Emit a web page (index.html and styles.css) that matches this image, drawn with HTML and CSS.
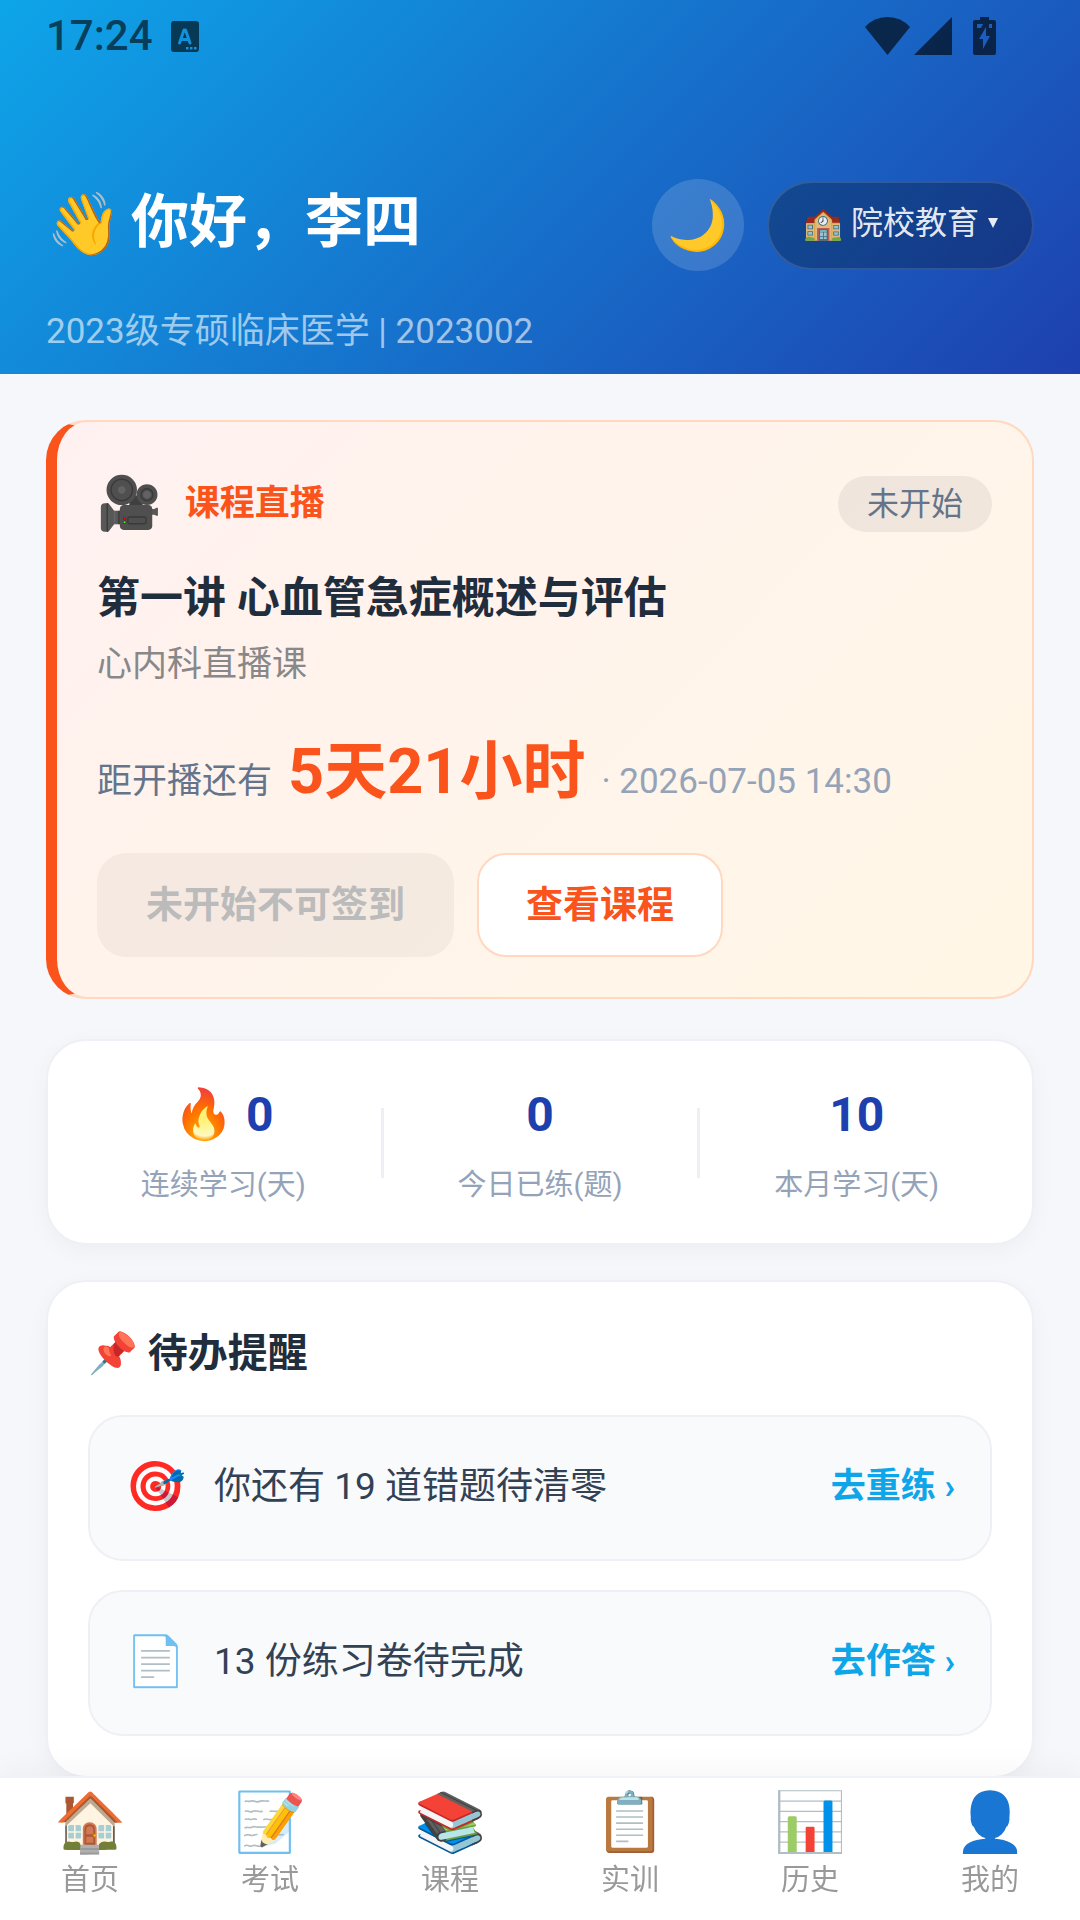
FILE: index.html
```html
<!DOCTYPE html>
<html lang="zh-CN">
<head>
  <meta charset="UTF-8">
  <meta name="viewport" content="width=device-width, initial-scale=1">
  <title>首页</title>
  <link rel="stylesheet" href="styles.css">
</head>
<body>

<header class="header">
  <div class="statusbar">
    <span class="time">17:24</span>
    <svg class="ime" width="28" height="31" viewBox="0 0 28 31">
      <path fill="currentColor" fill-rule="evenodd" d="M3 0h22a3 3 0 0 1 3 3v25a3 3 0 0 1-3 3H3a3 3 0 0 1-3-3V3a3 3 0 0 1 3-3zM15 26v2.500h2.500V26zM19 26v2.500h2.500V26zM23 26v2.500h2.500V26z"/>
      <path fill="none" stroke="#1190dc" stroke-width="3" stroke-linecap="round" stroke-linejoin="round" d="M8.500 22L13 9h1.500L19 22M10.500 18.500h7"/>
    </svg>
    <span class="status-right">
      <svg width="45" height="38" viewBox="0 0 45 38"><path fill="currentColor" d="M0 10Q9 0 22.500 0T45 10L22.500 38z"/></svg>
      <svg width="38" height="38" viewBox="0 0 38 38"><path fill="currentColor" d="M38 0v38H0z"/></svg>
      <svg class="battery" width="23" height="38" viewBox="0 0 23 38">
        <path fill="currentColor" fill-rule="evenodd" d="M7 0h9v3h5a2 2 0 0 1 2 2v31a2 2 0 0 1-2 2H2a2 2 0 0 1-2-2V5a2 2 0 0 1 2-2h5zM4 7v4h4l2-4zM16 7v4h3V7zM13 10L6 22h4v10l7-13h-4z"/>
      </svg>
    </span>
  </div>
  <div class="hello">
    <h1><span>👋</span>你好，李四</h1>
    <button class="theme" type="button" aria-label="夜间模式">🌙</button>
    <label class="switch">
      <span>🏫</span>
      <select aria-label="教育类型">
        <option>院校教育</option>
      </select>
      <svg width="10" height="10" viewBox="0 0 10 10"><path fill="currentColor" d="M0 0h10L5 10z"/></svg>
    </label>
  </div>
  <p class="class-info">2023级专硕临床医学 | 2023002</p>
</header>

<main>
  <section class="live">
    <div class="live-head">
      <span class="live-icon">🎥</span>
      <span class="live-type">课程直播</span>
      <span class="badge">未开始</span>
    </div>
    <h2>第一讲 心血管急症概述与评估</h2>
    <p class="live-sub">心内科直播课</p>
    <div class="countdown">
      <span>距开播还有</span>
      <strong>5天21小时</strong>
      <time datetime="2026-07-05T14:30">· 2026-07-05 14:30</time>
    </div>
    <div class="actions">
      <button type="button" disabled>未开始不可签到</button>
      <button type="button">查看课程</button>
    </div>
  </section>

  <section class="card stats">
    <div class="stat">
      <div class="num"><span>🔥</span> 0</div>
      <div class="label">连续学习(天)</div>
    </div>
    <div class="stat">
      <div class="num">0</div>
      <div class="label">今日已练(题)</div>
    </div>
    <div class="stat">
      <div class="num">10</div>
      <div class="label">本月学习(天)</div>
    </div>
  </section>

  <section class="card todo">
    <h2>📌 待办提醒</h2>
    <div class="item">
      <span class="item-icon">🎯</span>
      <span class="item-text">你还有 19 道错题待清零</span>
      <a href="#retry">去重练 ›</a>
    </div>
    <div class="item">
      <span class="item-icon">📄</span>
      <span class="item-text">13 份练习卷待完成</span>
      <a href="#papers">去作答 ›</a>
    </div>
  </section>
</main>

<nav class="tabbar">
  <a href="#home"><span>🏠</span>首页</a>
  <a href="#exam"><span>📝</span>考试</a>
  <a href="#course"><span>📚</span>课程</a>
  <a href="#training"><span>📋</span>实训</a>
  <a href="#history"><span>📊</span>历史</a>
  <a href="#me"><span>👤</span>我的</a>
</nav>

</body>
</html>
```
FILE: styles.css
```css
* { box-sizing: border-box; }
body {
  margin: 0;
  padding-bottom: 144px;
  background: #f5f7fb;
  color: #1f2d3d;
  font: 35px/56px Roboto, "Noto Sans CJK SC", "Noto Color Emoji", sans-serif;
}
h1, h2, p { margin: 0; }
button, select { font-family: inherit; }
a { text-decoration: none; }
svg { display: block; }

/* header */
.header {
  padding: 0 46px 14px;
  background: linear-gradient(135deg, #0ea5e9, #1e40af);
  color: #fff;
}
.statusbar {
  display: flex;
  align-items: center;
  height: 72px;
  margin-bottom: 107px;
  color: rgba(0,0,0,0.62);
}
.time { font-size: 42px; font-weight: 500; }
.ime { margin-left: 18px; }
.status-right {
  display: flex;
  gap: 4px;
  margin-left: auto;
  padding-right: 38px;
}
.battery { margin-left: 17px; }
.hello {
  display: flex;
  align-items: center;
  gap: 23px;
  height: 92px;
}
.hello h1 {
  display: flex;
  flex: 1;
  gap: 9px;
  padding-bottom: 4px;
  font-size: 58px;
  line-height: 88px;
}
.hello h1 span { padding-top: 2px; font-size: 61px; }
.theme {
  width: 92px;
  height: 92px;
  padding: 0;
  border: 0;
  border-radius: 50%;
  background: rgba(255,255,255,0.15);
  font-size: 49px;
}
.switch {
  display: flex;
  align-items: center;
  gap: 8px;
  height: 89px;
  padding: 0 34px 4px;
  border: 2px solid rgba(255,255,255,0.12);
  border-radius: 45px;
  background: rgba(0,0,0,0.25) border-box;
  color: rgba(255,255,255,0.9);
  font-size: 32px;
}
.switch select {
  appearance: none;
  padding: 0;
  border: 0;
  background: none;
  color: inherit;
  font-size: 32px;
}
.class-info {
  margin-top: 33px;
  color: rgba(255,255,255,0.6);
}

main { padding: 46px 46px 0; }

/* live course */
.live {
  margin-bottom: 40px;
  padding: 40px;
  border: 2px solid #ffd8bf;
  border-left: 11px solid #fa541c;
  border-radius: 40px;
  background: linear-gradient(135deg, #fff1f0, #fff7e6);
}
.live-head {
  display: flex;
  align-items: center;
  gap: 23px;
  height: 84px;
}
.live-icon { font-size: 52px; }
.live-type { color: #fa541c; font-weight: bold; }
.badge {
  margin-left: auto;
  padding: 0 29px;
  border-radius: 28px;
  background: rgba(0,0,0,0.06);
  color: #64748b;
  font-size: 32px;
}
.live h2 {
  margin-top: 18px;
  font-size: 43px;
  line-height: 68px;
}
.live-sub { margin-top: 5px; color: #888; }
.countdown {
  display: flex;
  align-items: baseline;
  gap: 16px;
  margin: 29px 0 21px;
  line-height: 100px;
  color: #64748b;
}
.countdown strong { color: #fa541c; font-size: 63px; }
.countdown time { color: #94a3b8; }
.actions { display: flex; gap: 23px; }
.actions button {
  height: 104px;
  padding: 0 47px 7px;
  border: 2px solid #ffd8bf;
  border-radius: 29px;
  background: #fff;
  color: #fa541c;
  font-size: 37px;
  font-weight: bold;
}
.actions button:disabled {
  border-color: transparent;
  background: rgba(0,0,0,0.04) border-box;
  color: #bbb;
}

/* white cards */
.card {
  margin-bottom: 35px;
  border: 2px solid #eff0f5;
  border-radius: 40px;
  background: #fff;
  box-shadow: 0 6px 23px rgba(0,0,0,0.04);
}
.stats { display: flex; padding: 35px 17px; }
.stat {
  position: relative;
  flex: 1;
  text-align: center;
}
.stat + .stat::before {
  content: "";
  position: absolute;
  left: -1px;
  top: 32px;
  width: 3px;
  height: 70px;
  background: #eeeff4;
}
.num {
  color: #1e40af;
  font-size: 48px;
  font-weight: bold;
  line-height: 77px;
}
.num span { font-size: 49px; }
.label {
  margin-top: 9px;
  color: #94a3b8;
  font-size: 29px;
  line-height: 46px;
}
.todo { padding: 40px; }
.todo h2 { font-size: 40px; line-height: 64px; }
.item {
  display: flex;
  align-items: center;
  gap: 28px;
  height: 146px;
  margin-top: 29px;
  padding: 0 35px 2px;
  border: 2px solid #eff0f5;
  border-radius: 35px;
  background: #f8fafc;
}
.item-icon { font-size: 49px; }
.item-text { flex: 1; color: #334155; font-size: 37px; }
.item a { color: #0ea5e9; font-weight: bold; }

/* bottom tabs */
.tabbar {
  position: fixed;
  left: 0;
  right: 0;
  bottom: 0;
  display: flex;
  height: 144px;
  border-top: 2px solid #f0f4f8;
  background: #fff;
  box-shadow: 0 -6px 29px rgba(0,0,0,0.04);
}
.tabbar a {
  flex: 1;
  padding-top: 9px;
  color: #999;
  font-size: 29px;
  line-height: 46px;
  text-align: center;
}
.tabbar span { display: block; font-size: 58px; line-height: 70px; }
```
